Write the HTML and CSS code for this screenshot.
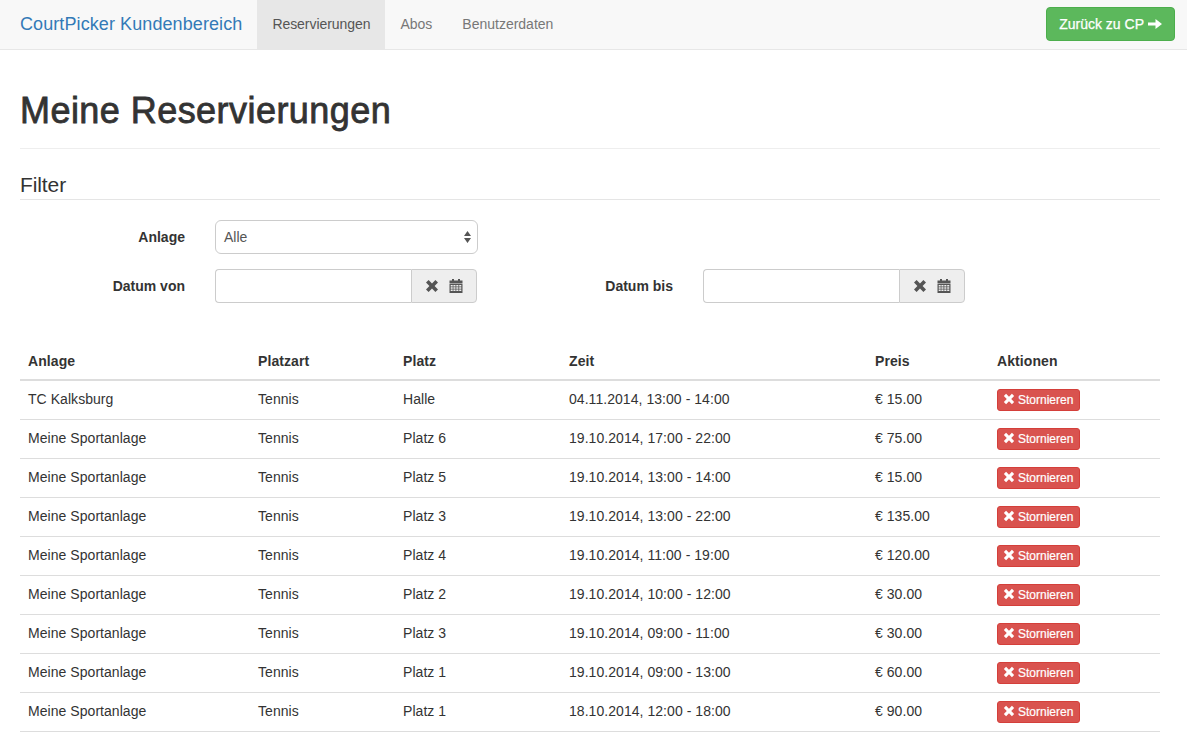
FILE: index.html
```html
<!DOCTYPE html>
<html lang="de">
<head>
<meta charset="utf-8">
<title>Meine Reservierungen</title>
<link rel="stylesheet" href="styles.css">
</head>
<body>
<svg class="defs" aria-hidden="true">
  <symbol id="i-x" viewBox="0 0 14 14"><path d="M1 3.600 3.600 1 7 4.400 10.400 1 13 3.600 9.600 7 13 10.400 10.400 13 7 9.600 3.600 13 1 10.400 4.400 7 1 3.600Z"/></symbol>
  <symbol id="i-cal" viewBox="0 0 14 14"><path d="M3 0h2v1.500h4V0h2v1.500h2.500v3H.5v-3H3V0Z"/><path fill-rule="evenodd" d="M.5 5h13v9H.5V5Zm1.200 1v1.500h2V6h-2Zm2.700 0v1.500h2.100V6H4.400Zm2.900 0v1.500h2.100V6H7.300Zm2.900 0v1.500h2.100V6h-2.100ZM1.700 8.200v1.500h2V8.200h-2Zm2.700 0v1.500h2.100V8.200H4.400Zm2.900 0v1.500h2.100V8.200H7.300Zm2.900 0v1.500h2.100V8.200h-2.100ZM1.700 10.400V12h2v-1.600h-2Zm2.700 0V12h2.100v-1.600H4.400Zm2.900 0V12h2.100v-1.600H7.300Zm2.900 0V12h2.100v-1.600h-2.100Z"/></symbol>
  <symbol id="i-arrow" viewBox="0 0 14 14"><path d="M0 5.500h7.500V2L14 7l-6.500 5V8.500H0v-3Z"/></symbol>
</svg>
<nav class="navbar">
  <a class="brand" href="#">CourtPicker Kundenbereich</a>
  <ul class="nav">
    <li class="nav-item active"><a href="#">Reservierungen</a></li>
    <li class="nav-item"><a href="#">Abos</a></li>
    <li class="nav-item"><a href="#">Benutzerdaten</a></li>
  </ul>
  <a class="btn-back" href="#">Zurück zu CP <svg class="icon-arrow"><use href="#i-arrow"/></svg></a>
</nav>
<main class="content">
  <h1 class="page-title">Meine Reservierungen</h1>
  <h4 class="section-title">Filter</h4>
  <form class="filter">
    <div class="filter-row">
      <label class="filter-label">Anlage</label>
      <div class="select"><span>Alle</span>
        <svg class="select-arrows" viewBox="0 0 7 12"><path d="M3.500 0 7 5H0ZM3.500 12 0 7h7Z"/></svg>
      </div>
    </div>
    <div class="filter-row">
      <label class="filter-label">Datum von</label>
      <div class="date-group">
        <div class="date-input"></div>
        <div class="date-addon"><svg class="icon-x"><use href="#i-x"/></svg><svg class="icon-cal"><use href="#i-cal"/></svg></div>
      </div>
      <label class="filter-label filter-label-second">Datum bis</label>
      <div class="date-group">
        <div class="date-input"></div>
        <div class="date-addon"><svg class="icon-x"><use href="#i-x"/></svg><svg class="icon-cal"><use href="#i-cal"/></svg></div>
      </div>
    </div>
  </form>
  <table class="table">
    <colgroup><col class="c1"><col class="c2"><col class="c3"><col class="c4"><col class="c5"><col class="c6"></colgroup>
    <thead><tr><th>Anlage</th><th>Platzart</th><th>Platz</th><th>Zeit</th><th>Preis</th><th>Aktionen</th></tr></thead>
    <tbody>
      <tr><td>TC Kalksburg</td><td>Tennis</td><td>Halle</td><td>04.11.2014, 13:00 - 14:00</td><td>€ 15.00</td><td class="cell-action"><a class="btn-cancel" href="#"><svg class="icon-xs"><use href="#i-x"/></svg>Stornieren</a></td></tr>
      <tr><td>Meine Sportanlage</td><td>Tennis</td><td>Platz 6</td><td>19.10.2014, 17:00 - 22:00</td><td>€ 75.00</td><td class="cell-action"><a class="btn-cancel" href="#"><svg class="icon-xs"><use href="#i-x"/></svg>Stornieren</a></td></tr>
      <tr><td>Meine Sportanlage</td><td>Tennis</td><td>Platz 5</td><td>19.10.2014, 13:00 - 14:00</td><td>€ 15.00</td><td class="cell-action"><a class="btn-cancel" href="#"><svg class="icon-xs"><use href="#i-x"/></svg>Stornieren</a></td></tr>
      <tr><td>Meine Sportanlage</td><td>Tennis</td><td>Platz 3</td><td>19.10.2014, 13:00 - 22:00</td><td>€ 135.00</td><td class="cell-action"><a class="btn-cancel" href="#"><svg class="icon-xs"><use href="#i-x"/></svg>Stornieren</a></td></tr>
      <tr><td>Meine Sportanlage</td><td>Tennis</td><td>Platz 4</td><td>19.10.2014, 11:00 - 19:00</td><td>€ 120.00</td><td class="cell-action"><a class="btn-cancel" href="#"><svg class="icon-xs"><use href="#i-x"/></svg>Stornieren</a></td></tr>
      <tr><td>Meine Sportanlage</td><td>Tennis</td><td>Platz 2</td><td>19.10.2014, 10:00 - 12:00</td><td>€ 30.00</td><td class="cell-action"><a class="btn-cancel" href="#"><svg class="icon-xs"><use href="#i-x"/></svg>Stornieren</a></td></tr>
      <tr><td>Meine Sportanlage</td><td>Tennis</td><td>Platz 3</td><td>19.10.2014, 09:00 - 11:00</td><td>€ 30.00</td><td class="cell-action"><a class="btn-cancel" href="#"><svg class="icon-xs"><use href="#i-x"/></svg>Stornieren</a></td></tr>
      <tr><td>Meine Sportanlage</td><td>Tennis</td><td>Platz 1</td><td>19.10.2014, 09:00 - 13:00</td><td>€ 60.00</td><td class="cell-action"><a class="btn-cancel" href="#"><svg class="icon-xs"><use href="#i-x"/></svg>Stornieren</a></td></tr>
      <tr><td>Meine Sportanlage</td><td>Tennis</td><td>Platz 1</td><td>18.10.2014, 12:00 - 18:00</td><td>€ 90.00</td><td class="cell-action"><a class="btn-cancel" href="#"><svg class="icon-xs"><use href="#i-x"/></svg>Stornieren</a></td></tr>
    </tbody>
  </table>
</main>
</body>
</html>
```
FILE: styles.css
```css
* { box-sizing: border-box; }
html, body { margin: 0; padding: 0; }
body {
  font-family: "Liberation Sans", Arial, sans-serif;
  font-size: 14px;
  line-height: 20px;
  color: #333;
  background: #fff;
  overflow: hidden;
}
a { text-decoration: none; }
.defs { display: none; }

.navbar {
  display: flex;
  align-items: stretch;
  height: 50px;
  padding: 0 12px 0 5px;
  background: #f8f8f8;
  border-bottom: 1px solid #e7e7e7;
}
.brand {
  padding: 14px 15px 15px;
  font-size: 18px;
  letter-spacing: 0.09px;
  color: #337ab7;
}
.nav {
  display: flex;
  margin: 0;
  padding: 0;
  list-style: none;
}
.nav-item a {
  display: block;
  padding: 14px 15px 15px;
  color: #777;
}
.nav-item.active a {
  width: 128px;
  background: #e7e7e7;
  color: #555;
  letter-spacing: -0.05px;
}
.btn-back {
  display: flex;
  align-items: center;
  gap: 4px;
  margin: 7px 0 8px auto;
  padding: 0 12px;
  background: #5cb85c;
  border: 1px solid #4cae4c;
  border-radius: 4px;
  color: #fff;
  -webkit-text-stroke: 0.25px #fff;
}
.icon-arrow { width: 14px; height: 14px; fill: #fff; }

.content { padding: 0 27px 0 20px; }
.page-title {
  box-sizing: content-box;
  height: 40px;
  margin: 40px 0 20px;
  padding: 1px 0 17px;
  border-bottom: 1px solid #eee;
  font-size: 36px;
  line-height: 40px;
  font-weight: 400;
  letter-spacing: 0.45px;
  -webkit-text-stroke: 0.8px #333;
}
.section-title {
  margin: 0 0 20px;
  padding: 2px 0 1px;
  border-bottom: 1px solid #e5e5e5;
  font-size: 21px;
  line-height: 27px;
  font-weight: 400;
  letter-spacing: -0.1px;
  color: #333;
}
.filter {
  display: flex;
  flex-direction: column;
  gap: 15px;
  margin-bottom: 40px;
}
.filter-row { display: flex; align-items: center; height: 34px; }
.filter-label {
  width: 165px;
  margin-right: 30px;
  text-align: right;
  font-weight: 700;
}
.filter-label-second { margin-left: 31px; }
.select {
  display: flex;
  align-items: center;
  justify-content: space-between;
  width: 263px;
  height: 34px;
  padding: 0 6px 0 8px;
  background: #fff;
  border: 1px solid #ccc;
  border-radius: 6px;
  color: #555;
}
.select-arrows { width: 7px; height: 12px; fill: #555; }
.date-group { display: flex; width: 262px; height: 34px; }
.date-input {
  flex: 1;
  background: #fff;
  border: 1px solid #ccc;
  border-right: 0;
  border-radius: 4px 0 0 4px;
}
.date-addon {
  display: flex;
  align-items: center;
  gap: 10px;
  width: 66px;
  padding-left: 13px;
  background: #eee;
  border: 1px solid #ccc;
  border-radius: 0 4px 4px 0;
}
.icon-x, .icon-cal { width: 14px; height: 14px; fill: #555; }

.table {
  width: 1140px;
  border-collapse: separate;
  border-spacing: 0;
  table-layout: fixed;
}
.c1 { width: 230px; }
.c2 { width: 145px; }
.c3 { width: 166px; }
.c4 { width: 306px; }
.c5 { width: 122px; }
.c6 { width: 171px; }
.table th {
  padding: 8px;
  height: 38px;
  text-align: left;
  font-weight: 700;
  letter-spacing: 0.08px;
  border-bottom: 2px solid #ddd;
}
.table td {
  padding: 0 8px 2px;
  height: 39px;
  letter-spacing: 0.05px;
  border-bottom: 1px solid #ddd;
  vertical-align: middle;
}
.table .cell-action { padding-bottom: 0; }
.btn-cancel {
  display: flex;
  align-items: center;
  gap: 3px;
  width: 83px;
  height: 22px;
  padding: 0 5px;
  background: #d9534f;
  border: 1px solid #d43f3a;
  border-radius: 3px;
  color: #fff;
  font-size: 12px;
  line-height: 18px;
  letter-spacing: 0;
  -webkit-text-stroke: 0.2px #fff;
}
.icon-xs { width: 12px; height: 12px; margin-top: -2px; fill: #fff; }
```
